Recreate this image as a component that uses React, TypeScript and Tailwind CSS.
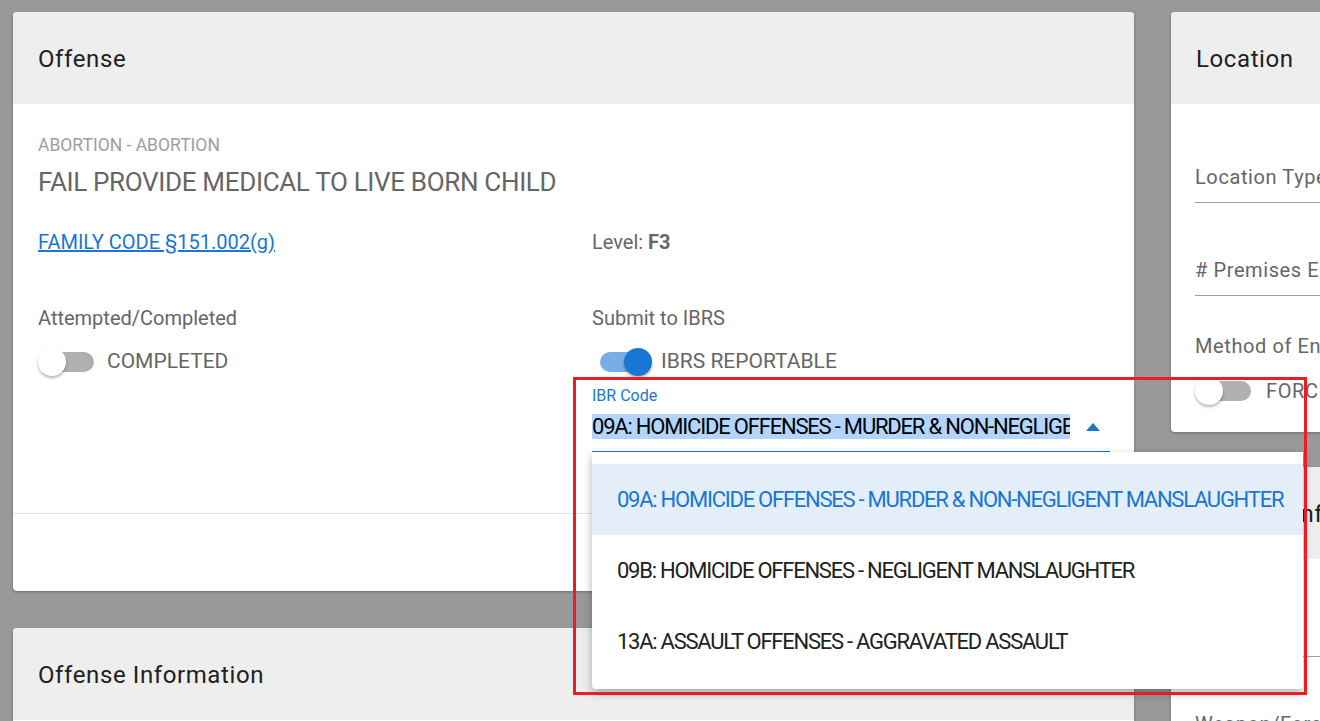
import React from "react"

const font = { fontFamily: "Roboto, 'Liberation Sans', sans-serif" }

function Toggle({ on }: { on: boolean }) {
  return (
    <div className="relative w-[58px] h-[28px] shrink-0">
      <div
        className={
          "absolute left-[6px] top-[4px] w-[50px] h-[20px] rounded-full " +
          (on ? "bg-[#78aee6]" : "bg-[#b0b0b0]")
        }
      />
      <div
        className={
          "absolute top-0 w-[28px] h-[28px] rounded-full shadow-[0_2px_3px_rgba(0,0,0,0.3)] " +
          (on ? "left-[30px] bg-[#1976d2]" : "left-0 bg-white")
        }
      />
    </div>
  )
}

function CardHeader({ title }: { title: string }) {
  return (
    <div className="h-[92px] bg-[#eeeeee] rounded-t-[4px] px-[25px] flex items-center shrink-0">
      <h2 className="text-[24px] tracking-[0.6px] text-[#212121] pt-[2px]">{title}</h2>
    </div>
  )
}

function OffenseCard() {
  return (
    <div className="shrink-0 bg-white rounded-[4px] shadow-[0_1px_3px_rgba(0,0,0,0.3)] h-[579px] flex flex-col">
      <CardHeader title="Offense" />
      <div className="px-[25px] pt-[30px] h-[410px] border-b border-[#e0e0e0] shrink-0">
        <div className="text-[17.5px] leading-[22px] text-[#9e9e9e]">ABORTION - ABORTION</div>
        <div className="mt-[11px] text-[26px] leading-[30px] tracking-[-0.33px] text-[#666666]">
          FAIL PROVIDE MEDICAL TO LIVE BORN CHILD
        </div>
        <div className="grid grid-cols-[554px_1fr] mt-[33px]">
          <div>
            <a href="#" className="text-[20px] leading-[24px] text-[#1976d2] underline">
              FAMILY CODE §151.002(g)
            </a>
          </div>
          <div className="text-[20px] leading-[24px] text-[#666666]">
            Level: <span className="font-bold">F3</span>
          </div>

          <div className="mt-[50px]">
            <div className="text-[20px] leading-[24px] text-[#666666]">Attempted/Completed</div>
            <div className="flex items-center gap-[11px] mt-[16px]">
              <Toggle on={false} />
              <span className="text-[21px] text-[#666666]">COMPLETED</span>
            </div>
          </div>
          <div className="mt-[50px]">
            <div className="text-[20px] leading-[24px] text-[#666666]">Submit to IBRS</div>
            <div className="flex items-center gap-[9px] mt-[16px] ml-[2px]">
              <Toggle on={true} />
              <span className="text-[21px] text-[#666666]">IBRS REPORTABLE</span>
            </div>
            <div className="mt-[8px] w-[518px]">
              <div className="text-[16px] leading-[20px] text-[#1976d2]">IBR Code</div>
              <div className="flex items-start h-[47px] pt-[8px] border-b-2 border-[#1976d2]">
                <div className="w-[478px] h-[25px] overflow-hidden whitespace-nowrap bg-[#b3d4fc] text-[22px] leading-[25px] tracking-[-1.2px] text-black">
                  <span className="underline decoration-wavy decoration-[#e53935] decoration-1 underline-offset-[4px]">09A</span>
                  : HOMICIDE OFFENSES - MURDER &amp; NON-NEGLIGENT MANSLAUGHTER
                </div>
                <svg className="ml-[16px] mt-[9px]" width="14" height="8" viewBox="0 0 14 8">
                  <path d="M0 8 L7 0 L14 8 Z" fill="#1976d2" />
                </svg>
              </div>
            </div>
          </div>
        </div>
      </div>
    </div>
  )
}

function UnderlinedField({ label }: { label: string }) {
  return (
    <div className="h-[38px] border-b border-[#9e9e9e] whitespace-nowrap">
      <span className="text-[20px] leading-[24px] tracking-[0.6px] text-[#666666]">{label}</span>
    </div>
  )
}

export default function App() {
  const options = [
    "09A: HOMICIDE OFFENSES - MURDER & NON-NEGLIGENT MANSLAUGHTER",
    "09B: HOMICIDE OFFENSES - NEGLIGENT MANSLAUGHTER",
    "13A: ASSAULT OFFENSES - AGGRAVATED ASSAULT",
  ]

  return (
    <div style={font} className="relative w-[1320px] h-[721px] overflow-hidden bg-[#999999] flex gap-[37px] pl-[13px] pt-[12px]">
      <div className="w-[1121px] shrink-0 flex flex-col gap-[37px]">
        <OffenseCard />
        <div className="shrink-0 bg-white rounded-[4px] shadow-[0_1px_3px_rgba(0,0,0,0.3)] h-[300px]">
          <CardHeader title="Offense Information" />
        </div>
      </div>

      <div className="w-[400px] shrink-0 flex flex-col gap-[35px]">
        <div className="shrink-0 bg-white rounded-[4px] shadow-[0_1px_3px_rgba(0,0,0,0.3)] h-[420px] flex flex-col">
          <CardHeader title="Location" />
          <div className="px-[24px] pt-[61px] flex flex-col">
            <UnderlinedField label="Location Type" />
            <div className="mt-[55px]">
              <UnderlinedField label="# Premises Entered" />
            </div>
            <div className="mt-[38px] text-[20px] leading-[24px] tracking-[0.6px] text-[#666666] whitespace-nowrap">Method of Entry</div>
            <div className="flex items-center gap-[13px] mt-[18px]">
              <Toggle on={false} />
              <span className="text-[20px] tracking-[0.6px] text-[#666666]">FORCED</span>
            </div>
          </div>
        </div>
        <div className="shrink-0 bg-white rounded-[4px] shadow-[0_1px_3px_rgba(0,0,0,0.3)] h-[300px] flex flex-col">
          <CardHeader title="Weapon Information" />
          <div className="px-[24px] pt-[60px]">
            <UnderlinedField label="Force Used" />
            <div className="mt-[55px] text-[20px] leading-[24px] tracking-[0.6px] text-[#666666] whitespace-nowrap">Weapon/Force</div>
          </div>
        </div>
      </div>

      <div className="absolute left-[592px] top-[452px] w-[711px] bg-white rounded-b-[4px] shadow-[0_4px_10px_rgba(0,0,0,0.3)] py-[12px]">
        {options.map((o, i) => (
          <div
            key={o}
            className={
              "h-[71px] px-[25px] flex items-center text-[22px] tracking-[-1.25px] whitespace-nowrap " +
              (i === 0 ? "bg-[#e3eef9] text-[#1976d2]" : "text-[#212121]")
            }
          >
            {o}
          </div>
        ))}
      </div>

      <div className="absolute left-[573px] top-[377px] w-[734px] h-[318px] border-[3px] border-[#ed1c24] pointer-events-none" />
    </div>
  )
}
